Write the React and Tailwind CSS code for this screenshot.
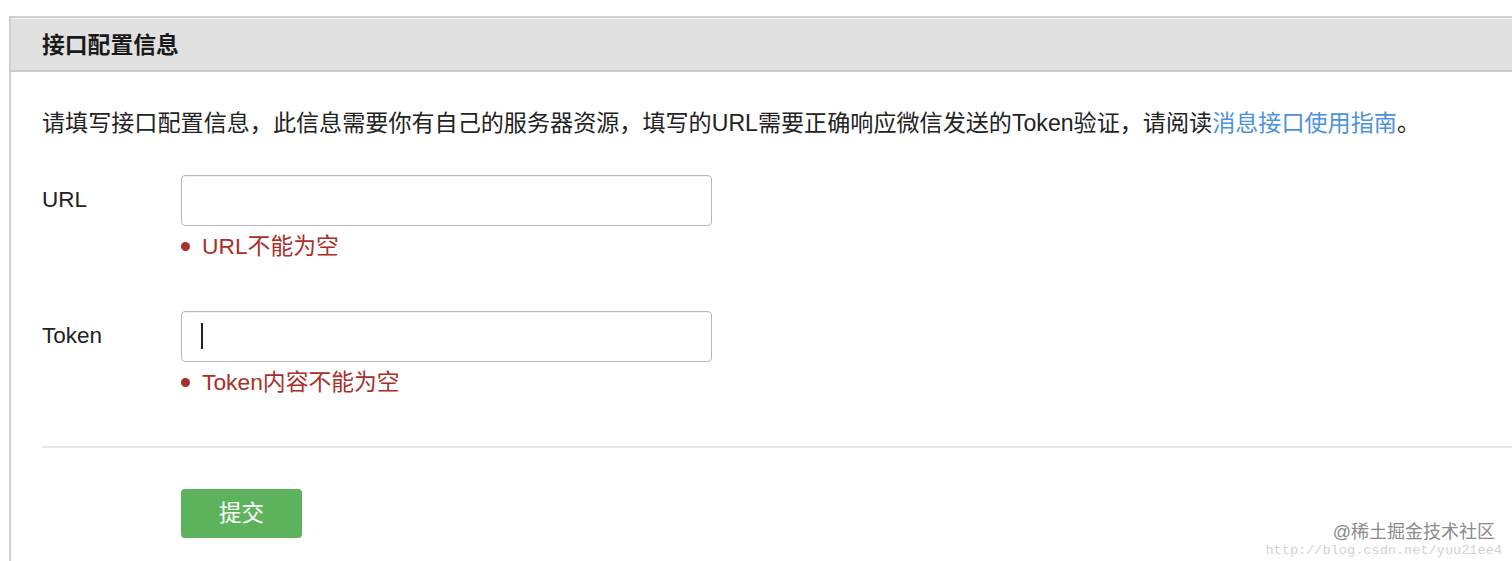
import React, { useState } from 'react';

const FONT = { fontFamily: '"Liberation Sans", "Noto Sans CJK SC", sans-serif' };

function Field({ label, value, onChange, error, caret }) {
  return (
    <div className="flex">
      <label className="w-[139px] pt-[12px] text-[22.5px] leading-[26px] text-[#222]">{label}</label>
      <div>
        <div className="relative">
          <input
            value={value}
            onChange={onChange}
            className="block h-[51px] w-[531px] rounded-[4px] border border-[#b9b9b9] bg-white px-[19px] text-[22px] outline-none shadow-[inset_0_1px_1px_rgba(0,0,0,0.06)]"
          />
          {caret && <span className="absolute left-[20px] top-[12px] h-[26px] w-[2px] bg-[#222]" />}
        </div>
        <div className="mt-[7px] flex items-center text-[22.8px] leading-[26px] text-[#a9302a]">
          <span className="mr-[12px] inline-block h-[9px] w-[9px] rounded-full bg-[#a9302a]" />
          {error}
        </div>
      </div>
    </div>
  );
}

export default function App() {
  const [url, setUrl] = useState('');
  const [token, setToken] = useState('');

  return (
    <div className="relative flex h-[561px] w-[1512px] flex-col overflow-hidden bg-white" style={FONT}>
      <div className="ml-[9px] mt-[16px] flex-1 border-l-2 border-t-2 border-[#d0d0d0]">
        {/* header */}
        <div className="h-[54px] border-b-2 border-t border-b-[#c9c9c9] border-t-[#efefef] bg-[#e1e1e1] pl-[31px]">
          <h2 className="pt-[11px] text-[22.8px] font-bold leading-[30px] text-[#1a1a1a]">接口配置信息</h2>
        </div>

        <div className="pl-[31px] pt-[36px]">
          <p className="text-[23.1px] leading-[30px] text-[#222]">
            请填写接口配置信息，此信息需要你有自己的服务器资源，填写的URL需要正确响应微信发送的Token验证，请阅读
            <a className="text-[#4b92dc]">消息接口使用指南</a>。
          </p>

          <div className="mt-[37px] flex flex-col gap-[52px]">
            <Field label="URL" value={url} onChange={(e) => setUrl(e.target.value)} error="URL不能为空" />
            <Field label="Token" value={token} onChange={(e) => setToken(e.target.value)} error="Token内容不能为空" caret />
          </div>

          <div className="mt-[51px] border-t-2 border-[#e6e6e6]" />

          <div className="pl-[139px] pt-[41px]">
            <button className="h-[49px] w-[121px] rounded-[4px] bg-[#5cb35c] text-[22.5px] text-white">提交</button>
          </div>
        </div>
      </div>

      {/* watermark */}
      <div className="absolute right-[17px] top-[522px] text-[18px] leading-[20px] text-[#8a8a8a]">@稀土掘金技术社区</div>
      <div
        className="absolute right-[10px] top-[543px] text-[13.6px] leading-[16px] text-[#d2d2d2]"
        style={{ fontFamily: '"Liberation Mono", monospace' }}
      >
        http://blog.csdn.net/yuu21ee4
      </div>
    </div>
  );
}
